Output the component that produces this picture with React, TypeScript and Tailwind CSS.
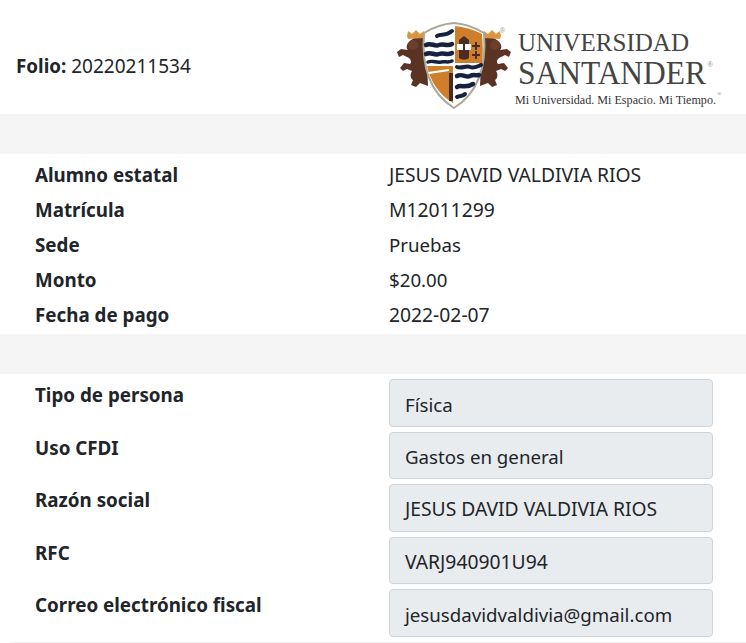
import React from 'react';

const datos = [
  { label: 'Alumno estatal', value: 'JESUS DAVID VALDIVIA RIOS', wide: true },
  { label: 'Matrícula', value: 'M12011299', wide: true },
  { label: 'Sede', value: 'Pruebas', wide: false },
  { label: 'Monto', value: '$20.00', wide: false },
  { label: 'Fecha de pago', value: '2022-02-07', wide: true },
];

const fiscales = [
  { label: 'Tipo de persona', value: 'Física', wide: false },
  { label: 'Uso CFDI', value: 'Gastos en general', wide: false },
  { label: 'Razón social', value: 'JESUS DAVID VALDIVIA RIOS', wide: true },
  { label: 'RFC', value: 'VARJ940901U94', wide: true },
  { label: 'Correo electrónico fiscal', value: 'jesusdavidvaldivia@gmail.com', wide: false },
];

const Lion = () => (
  <g fill="#5a3325">
    <path d="M426 38 C420 36 414 37 410 41 C406 44 406 48 408 50 L401 49 L397 52 L399 57 L403 55 L409 58 C411 60 412 62 410 64 L404 63 L400 68 L403 71 L407 69 L412 71 C410 74 410 78 413 80 L411 85 L416 87 L420 83 L428 86 Z" />
    <circle cx="413" cy="45" r="5" fill="#6b3f2c" />
  </g>
);

const Logo = () => (
  <svg width="330" height="96" viewBox="395 18 330 96" className="block">
    <Lion />
    <g transform="matrix(-1 0 0 1 908 0)">
      <Lion />
    </g>
    <path d="M407 36 L408 31 L412 34 L416 30 L420 34 L424 31 L425 38 L408 39 Z" fill="#d9963f" />
    <path d="M501 36 L500 31 L496 34 L492 30 L488 34 L484 31 L483 38 L500 39 Z" fill="#d9963f" />
    {/* shield */}
    <path d="M454 23 C442 24 432 28 424 33 C422 58 425 90 454 108 C483 90 486 58 484 33 C476 28 466 24 454 23 Z" fill="#fff" stroke="#a9a898" strokeWidth="2" />
    <path d="M455 26 C464 27 472 29 482 34 C483 46 483 56 482 63 L455 63 Z" fill="#cf7f2c" />
    <path d="M427 66 L453 66 L453 103 C438 94 430 80 427 66 Z" fill="#cf7f2c" />
    <path d="M428 72 L449 69 L449 71 L429 74 Z" fill="#fff" />
    <rect x="449" y="73" width="4" height="28" fill="#4a2c20" />
    <g fill="none" stroke="#16203f" strokeLinecap="round">
      <path d="M437 36 C441 33 445 37 452 31" strokeWidth="4" />
      <path d="M426 45 C431 42 434 47 439 45 C444 43 447 47 452 44" strokeWidth="4.5" />
      <path d="M426 54 C431 51 434 56 439 54 C444 52 447 56 452 53" strokeWidth="4.5" />
      <path d="M428 62 C433 60 436 63 441 62 C445 61 448 63 452 61" strokeWidth="3.5" />
      <path d="M457 67 C462 69 466 65 470 67 C474 69 478 66 481 65" strokeWidth="4" />
      <path d="M457 76 C462 73 466 78 470 76 C474 74 476 76 479 75" strokeWidth="4.5" />
      <path d="M457 87 C461 84 465 89 473 84" strokeWidth="4.5" />
      <path d="M457 97 C460 95 462 97 465 94" strokeWidth="4" />
    </g>
    {/* caravel + crosses */}
    <path d="M459 40 L464 36 L469 40 L469 58 C466 60 462 60 459 58 Z" fill="#4a2c20" />
    <rect x="457" y="44" width="14" height="6" fill="#fff" />
    <rect x="463" y="42" width="2" height="10" fill="#4a2c20" />
    <g fill="#4a2c20">
      <rect x="472" y="45" width="8" height="2" />
      <rect x="475" y="42" width="2" height="8" />
      <rect x="472" y="54" width="8" height="2" />
      <rect x="475" y="51" width="2" height="8" />
    </g>
    <text x="500" y="33" fontSize="7" fill="#999" fontFamily="'Liberation Sans', sans-serif">®</text>
    {/* wordmark */}
    <g fontFamily="'Liberation Serif', serif" fill="#444">
      <text x="518" y="51" fontSize="26" textLength="171" lengthAdjust="spacingAndGlyphs">UNIVERSIDAD</text>
      <text x="518" y="84" fontSize="33" textLength="188" lengthAdjust="spacingAndGlyphs">SANTANDER</text>
      <text x="707" y="67" fontSize="8" fill="#888">®</text>
      <text x="515" y="104" fontSize="13" textLength="201" lengthAdjust="spacingAndGlyphs" fill="#333">Mi Universidad. Mi Espacio. Mi Tiempo.</text>
      <text x="717" y="96" fontSize="6" fill="#888">®</text>
    </g>
  </svg>
);

export default function App() {
  return (
    <div className="min-h-screen bg-white text-[18.7px] text-[#212529] font-['Noto_Sans',sans-serif]">
      <header className="flex h-[114px] items-center pt-[18px]">
        <p className="w-[395px] pl-4 text-[19px]">
          <b className="text-[18.8px]">Folio:</b> 20220211534
        </p>
        <Logo />
      </header>

      <div className="h-10 bg-[#f5f5f5]" />

      <section className="px-[35px] pb-px pt-1">
        {datos.map((d) => (
          <div key={d.label} className="grid h-[35px] grid-cols-[354px_1fr] items-center">
            <b className="text-[18.8px]">{d.label}</b>
            <span className={d.wide ? 'text-[19.3px]' : ''}>{d.value}</span>
          </div>
        ))}
      </section>

      <div className="h-10 bg-[#f5f5f5]" />

      <section className="flex flex-col gap-[5px] pl-[35px] pr-[33px] pt-[5.3px]">
        {fiscales.map((f) => (
          <div key={f.label} className="grid grid-cols-[354px_1fr] items-start">
            <b className="text-[18.8px] leading-[32px]">{f.label}</b>
            <div
              className={`flex h-[47.5px] items-center rounded border border-[#ced4da] bg-[#e9ecef] px-[15px] pt-[3px] ${
                f.wide ? 'text-[19.3px]' : ''
              }`}
            >
              {f.value}
            </div>
          </div>
        ))}
      </section>
      <div className="ml-[10px] mt-[5px] h-px bg-[#f0f0f0]" />
    </div>
  );
}
